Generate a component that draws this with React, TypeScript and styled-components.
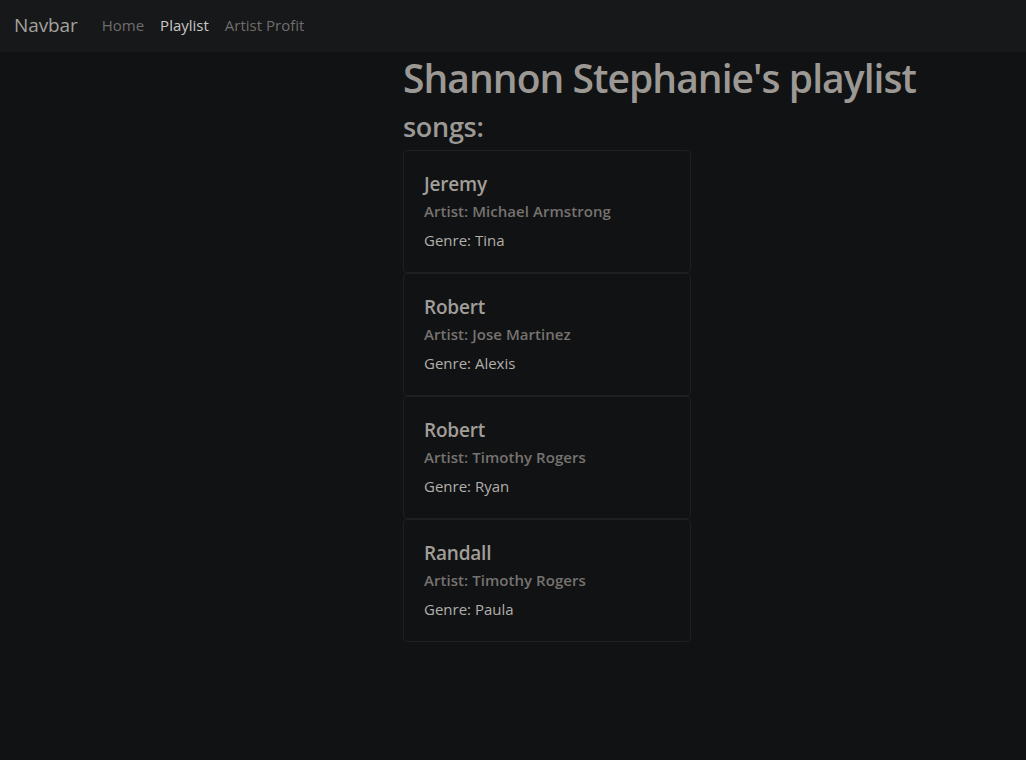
import React from "react";
import styled, { createGlobalStyle } from "styled-components";

const Global = createGlobalStyle`
  html, body { margin: 0; padding: 0; background: #111214; }
  body { font-family: "Open Sans", "Noto Sans", "Liberation Sans", sans-serif; color: #b4b2ae; }
  * { box-sizing: border-box; }
`;

const Page = styled.div`
  min-height: 760px;
  background: #111214;
`;

const Nav = styled.nav`
  height: 52px;
  background: #17181a;
  display: flex;
  align-items: center;
  padding: 0 14px 2px;
`;

const Brand = styled.a`
  font-size: 19px;
  color: #a3a19d;
  margin-right: 24px;
  text-decoration: none;
  letter-spacing: -0.1px;
`;

const NavLinks = styled.div`
  display: flex;
  gap: 16px;
`;

const NavLink = styled.a<{ $active?: boolean }>`
  font-size: 15px;
  color: ${(p) => (p.$active ? "#c9c7c3" : "#6f6d6a")};
  text-decoration: none;
  letter-spacing: 0;
`;

const Main = styled.main`
  padding: 2px 0 0 403px;
`;

const Title = styled.h1`
  margin: 0 0 8px;
  font-size: 39px;
  line-height: 48px;
  font-weight: 600;
  color: #9c9994;
  letter-spacing: -0.95px;
`;

const Sub = styled.h3`
  margin: 0 0 6px;
  font-size: 27px;
  line-height: 34px;
  font-weight: 600;
  color: #9c9994;
  letter-spacing: -0.3px;
`;

const List = styled.div`
  width: 288px;
  display: flex;
  flex-direction: column;
`;

const Card = styled.div`
  border: 1px solid #1e1f22;
  border-radius: 4px;
  padding: 21px 20px 20px;
  background: #111214;
`;

const CardTitle = styled.h5`
  margin: 0 0 6px;
  font-size: 19px;
  line-height: 24px;
  font-weight: 600;
  color: #a19e99;
  letter-spacing: -0.2px;
`;

const CardSub = styled.h6`
  margin: 0 0 7px;
  font-size: 15px;
  line-height: 19px;
  font-weight: 600;
  color: #76736f;
  letter-spacing: 0.05px;
`;

const CardText = styled.p`
  margin: 0;
  font-size: 15px;
  line-height: 24px;
  color: #b1afab;
  letter-spacing: 0;
`;

const songs = [
  { t: "Jeremy", a: "Michael Armstrong", g: "Tina" },
  { t: "Robert", a: "Jose Martinez", g: "Alexis" },
  { t: "Robert", a: "Timothy Rogers", g: "Ryan" },
  { t: "Randall", a: "Timothy Rogers", g: "Paula" },
];

export default function App() {
  return (
    <Page>
      <Global />
      <Nav>
        <Brand href="#">Navbar</Brand>
        <NavLinks>
          <NavLink href="#">Home</NavLink>
          <NavLink href="#" $active>Playlist</NavLink>
          <NavLink href="#">Artist Profit</NavLink>
        </NavLinks>
      </Nav>
      <Main>
        <Title>Shannon Stephanie's playlist</Title>
        <Sub>songs:</Sub>
        <List>
          {songs.map((s, i) => (
            <Card key={i}>
              <CardTitle>{s.t}</CardTitle>
              <CardSub>Artist: {s.a}</CardSub>
              <CardText>Genre: {s.g}</CardText>
            </Card>
          ))}
        </List>
      </Main>
    </Page>
  );
}
